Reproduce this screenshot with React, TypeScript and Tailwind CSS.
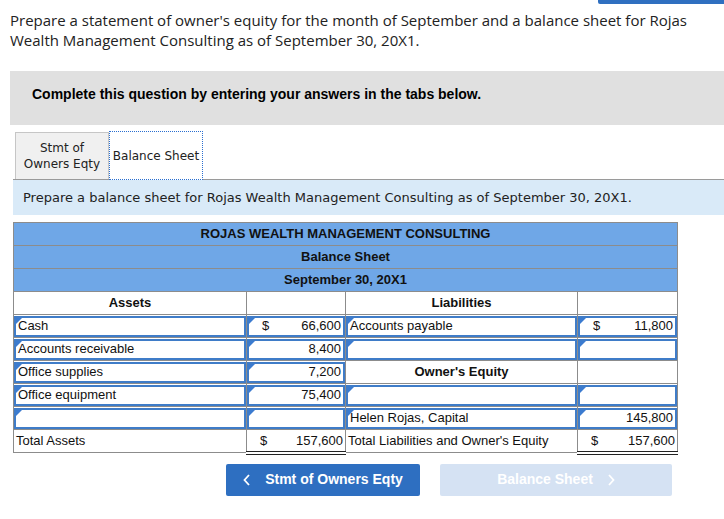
import React from 'react';

type Cell = { text?: string; dollar?: boolean; input?: boolean; align?: 'left' | 'right' | 'center'; bold?: boolean; dbl?: boolean };

const Flag = () => (
    <span className="absolute left-0 top-0 w-0 h-0 border-t-[6px] border-t-[#3b7bd0] border-r-[6px] border-r-transparent" />
);

const Td: React.FC<{ c: Cell }> = ({ c }) => {
    const inner = (
        <div className={`h-full w-full flex items-center px-[2px] ${c.align === 'right' ? 'justify-end' : c.align === 'center' ? 'justify-center' : 'justify-start'} ${c.bold ? 'font-bold' : ''}`}>
            {c.dollar && <span className="mr-auto pl-[11px]">$</span>}
            <span>{c.text}</span>
        </div>
    );
    return (
        <td className={`p-0 h-[23px] border border-[#8c8c8c] ${c.dbl ? 'border-b-[4px] border-b-[#222] border-double' : ''}`}>
            {c.input ? (
                <div className="relative h-[21px] border-2 border-[#3f7cc8] bg-white">
                    <Flag />
                    <div className="h-full">{inner}</div>
                </div>
            ) : inner}
        </td>
    );
};

const rows: Cell[][] = [
    [{ text: 'Assets', bold: true, align: 'center' }, {}, { text: 'Liabilities', bold: true, align: 'center' }, {}],
    [{ text: 'Cash', input: true }, { text: '66,600', dollar: true, input: true, align: 'right' }, { text: 'Accounts payable', input: true }, { text: '11,800', dollar: true, input: true, align: 'right' }],
    [{ text: 'Accounts receivable', input: true }, { text: '8,400', input: true, align: 'right' }, { input: true }, { input: true }],
    [{ text: 'Office supplies', input: true }, { text: '7,200', input: true, align: 'right' }, { text: "Owner's Equity", bold: true, align: 'center' }, {}],
    [{ text: 'Office equipment', input: true }, { text: '75,400', input: true, align: 'right' }, { input: true }, { input: true }],
    [{ input: true }, { input: true }, { text: 'Helen Rojas, Capital', input: true }, { text: '145,800', input: true, align: 'right' }],
    [{ text: 'Total Assets' }, { text: '157,600', dollar: true, align: 'right', dbl: true }, { text: "Total Liabilities and Owner's Equity" }, { text: '157,600', dollar: true, align: 'right', dbl: true }],
];

const App: React.FC = () => {
    return (
        <div className="relative w-[724px] h-[519px] bg-white overflow-hidden font-['Liberation_Sans',Arial,sans-serif] text-[#222]">
            {/* top button edge */}
            <div className="absolute right-0 top-0 w-[126px] h-[4px] bg-[#2f6fc0] rounded-bl-[2px]" />

            <p className="pt-[10px] pl-[10px] w-[710px] text-[15px] leading-[20px] text-[#222] font-['Open_Sans',sans-serif]">
                Prepare a statement of owner's equity for the month of September and a balance sheet for Rojas Wealth Management Consulting as of September 30, 20X1.
            </p>

            <div className="ml-[10px] mt-[21px] h-[54px] bg-[#e0e0e0] pl-[22px] pt-[13px]">
                <p className="text-[14px] font-bold text-black">Complete this question by entering your answers in the tabs below.</p>
            </div>

            {/* tabs */}
            <div className="ml-[13px] mt-[7px] font-['DejaVu_Sans',Verdana,sans-serif]">
                <div className="flex items-end pl-[2px] h-[47px]">
                    <div className="w-[94px] h-[47px] bg-[#f0f0f0] border border-[#c6c6c6] border-b-0 flex items-center justify-center text-center text-[12px] leading-[16px] text-[#222]">
                        Stmt of<br />Owners Eqty
                    </div>
                    <div className="w-[94px] h-[49px] -mb-[1px] bg-white border border-dotted border-[#2a6fd0] flex items-center justify-center text-[12px] text-[#222] -mt-[2px]">
                        Balance Sheet
                    </div>
                </div>
                <div className="h-[36px] bg-[#d9eaf8] border-t border-[#9a9a9a] pl-[10px] flex items-center text-[13px] text-[#222]">
                    Prepare a balance sheet for Rojas Wealth Management Consulting as of September 30, 20X1.
                </div>
            </div>

            {/* balance sheet */}
            <table className="ml-[13px] mt-[7px] border-collapse w-[664px] text-[13px] text-[#111] table-fixed">
                <colgroup>
                    <col className="w-[233px]" />
                    <col className="w-[99px]" />
                    <col className="w-[232px]" />
                    <col className="w-[100px]" />
                </colgroup>
                <tbody>
                    {['ROJAS WEALTH MANAGEMENT CONSULTING', 'Balance Sheet', 'September 30, 20X1'].map(t => (
                        <tr key={t}>
                            <td colSpan={4} className="h-[23px] p-0 bg-[#6fa7e7] border border-[#8c8c8c] text-center font-bold">{t}</td>
                        </tr>
                    ))}
                    {rows.map((r, i) => (
                        <tr key={i}>
                            {r.map((c, j) => <Td key={j} c={c} />)}
                        </tr>
                    ))}
                </tbody>
            </table>

            {/* nav buttons */}
            <div className="flex mt-[9px] ml-[226px] gap-[20px]">
                <button className="w-[194px] h-[32px] rounded-[2px] bg-[#2e6fc1] text-white text-[14px] font-bold flex items-center justify-center gap-[14px]">
                    <svg width="8" height="12" viewBox="0 0 8 12" fill="none" stroke="white" strokeWidth="1.8"><path d="M6 1L1.5 6L6 11" /></svg>
                    Stmt of Owners Eqty
                </button>
                <button className="w-[232px] h-[32px] rounded-[2px] bg-[#d5e2f3] text-white text-[14px] font-bold flex items-center justify-center gap-[14px]">
                    Balance Sheet
                    <svg width="8" height="12" viewBox="0 0 8 12" fill="none" stroke="white" strokeWidth="1.8"><path d="M2 1L6.5 6L2 11" /></svg>
                </button>
            </div>
        </div>
    );
};

export default App;
